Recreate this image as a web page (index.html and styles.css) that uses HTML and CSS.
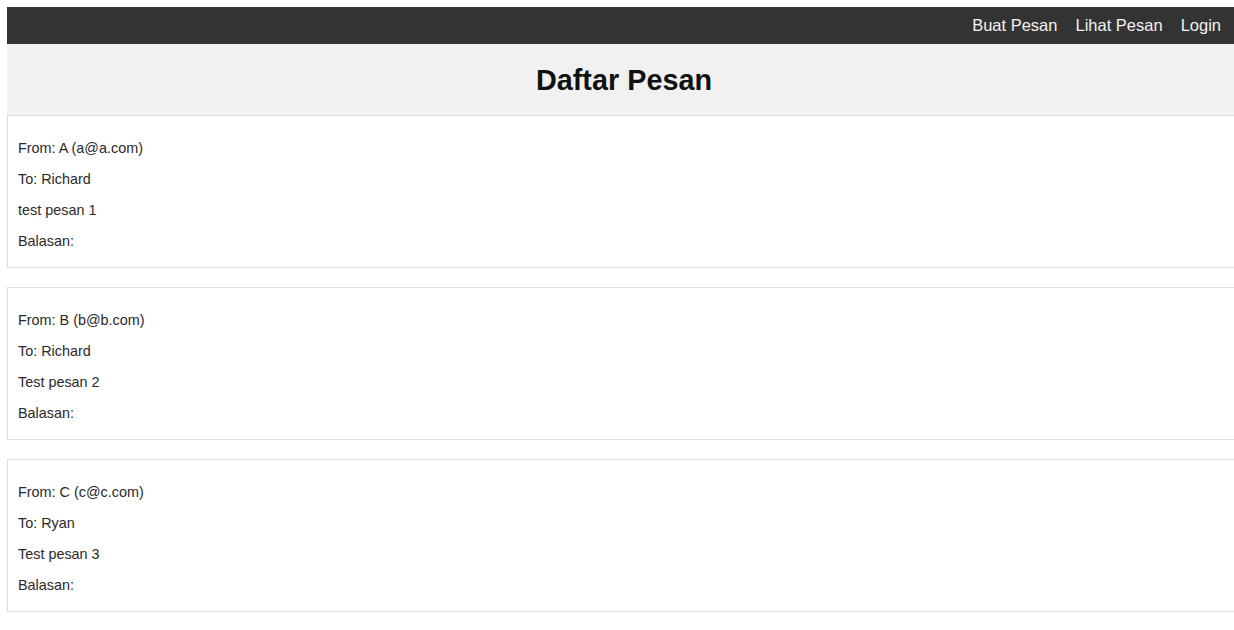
FILE: index.html
```html
<!DOCTYPE html>
<html lang="id">
<head>
<meta charset="utf-8">
<title>Daftar Pesan</title>
<link rel="stylesheet" href="styles.css">
</head>
<body>
<nav class="topnav">
  <a href="#" class="navlink">Buat Pesan</a>
  <a href="#" class="navlink">Lihat Pesan</a>
  <a href="#" class="navlink">Login</a>
</nav>
<header class="pagehead">
  <h1 class="title">Daftar Pesan</h1>
</header>
<main class="list">
  <section class="card">
    <p class="line">From: A (a@a.com)</p>
    <p class="line">To: Richard</p>
    <p class="line">test pesan 1</p>
    <p class="line">Balasan:</p>
  </section>
  <section class="card">
    <p class="line">From: B (b@b.com)</p>
    <p class="line">To: Richard</p>
    <p class="line">Test pesan 2</p>
    <p class="line">Balasan:</p>
  </section>
  <section class="card">
    <p class="line">From: C (c@c.com)</p>
    <p class="line">To: Ryan</p>
    <p class="line">Test pesan 3</p>
    <p class="line">Balasan:</p>
  </section>
</main>
</body>
</html>
```

FILE: styles.css
```css
html {
  overflow: hidden;
}
body {
  margin: 7px -7px 0 7px;
  font-family: "Liberation Sans", Arial, sans-serif;
  color: #2a2a2a;
  background: #fff;
}
.topnav {
  display: flex;
  justify-content: flex-end;
  align-items: center;
  height: 37px;
  background: #333;
  padding-right: 11px;
}
.navlink {
  color: #f2f2f2;
  text-decoration: none;
  font-size: 16.5px;
  padding: 0 9px;
}
.pagehead {
  background: #f1f1f1;
  height: 71px;
  display: flex;
  align-items: center;
  justify-content: center;
}
.title {
  margin: 0;
  font-size: 28.8px;
  font-weight: bold;
  color: #111;
  position: relative;
  top: 1px;
}
.card {
  border: 1px solid #ddd;
  padding: 10px 10px 3px;
  margin-bottom: 19px;
}
.line {
  margin: 14.4px 0;
  font-size: 14.4px;
  line-height: 16.5px;
}
```
